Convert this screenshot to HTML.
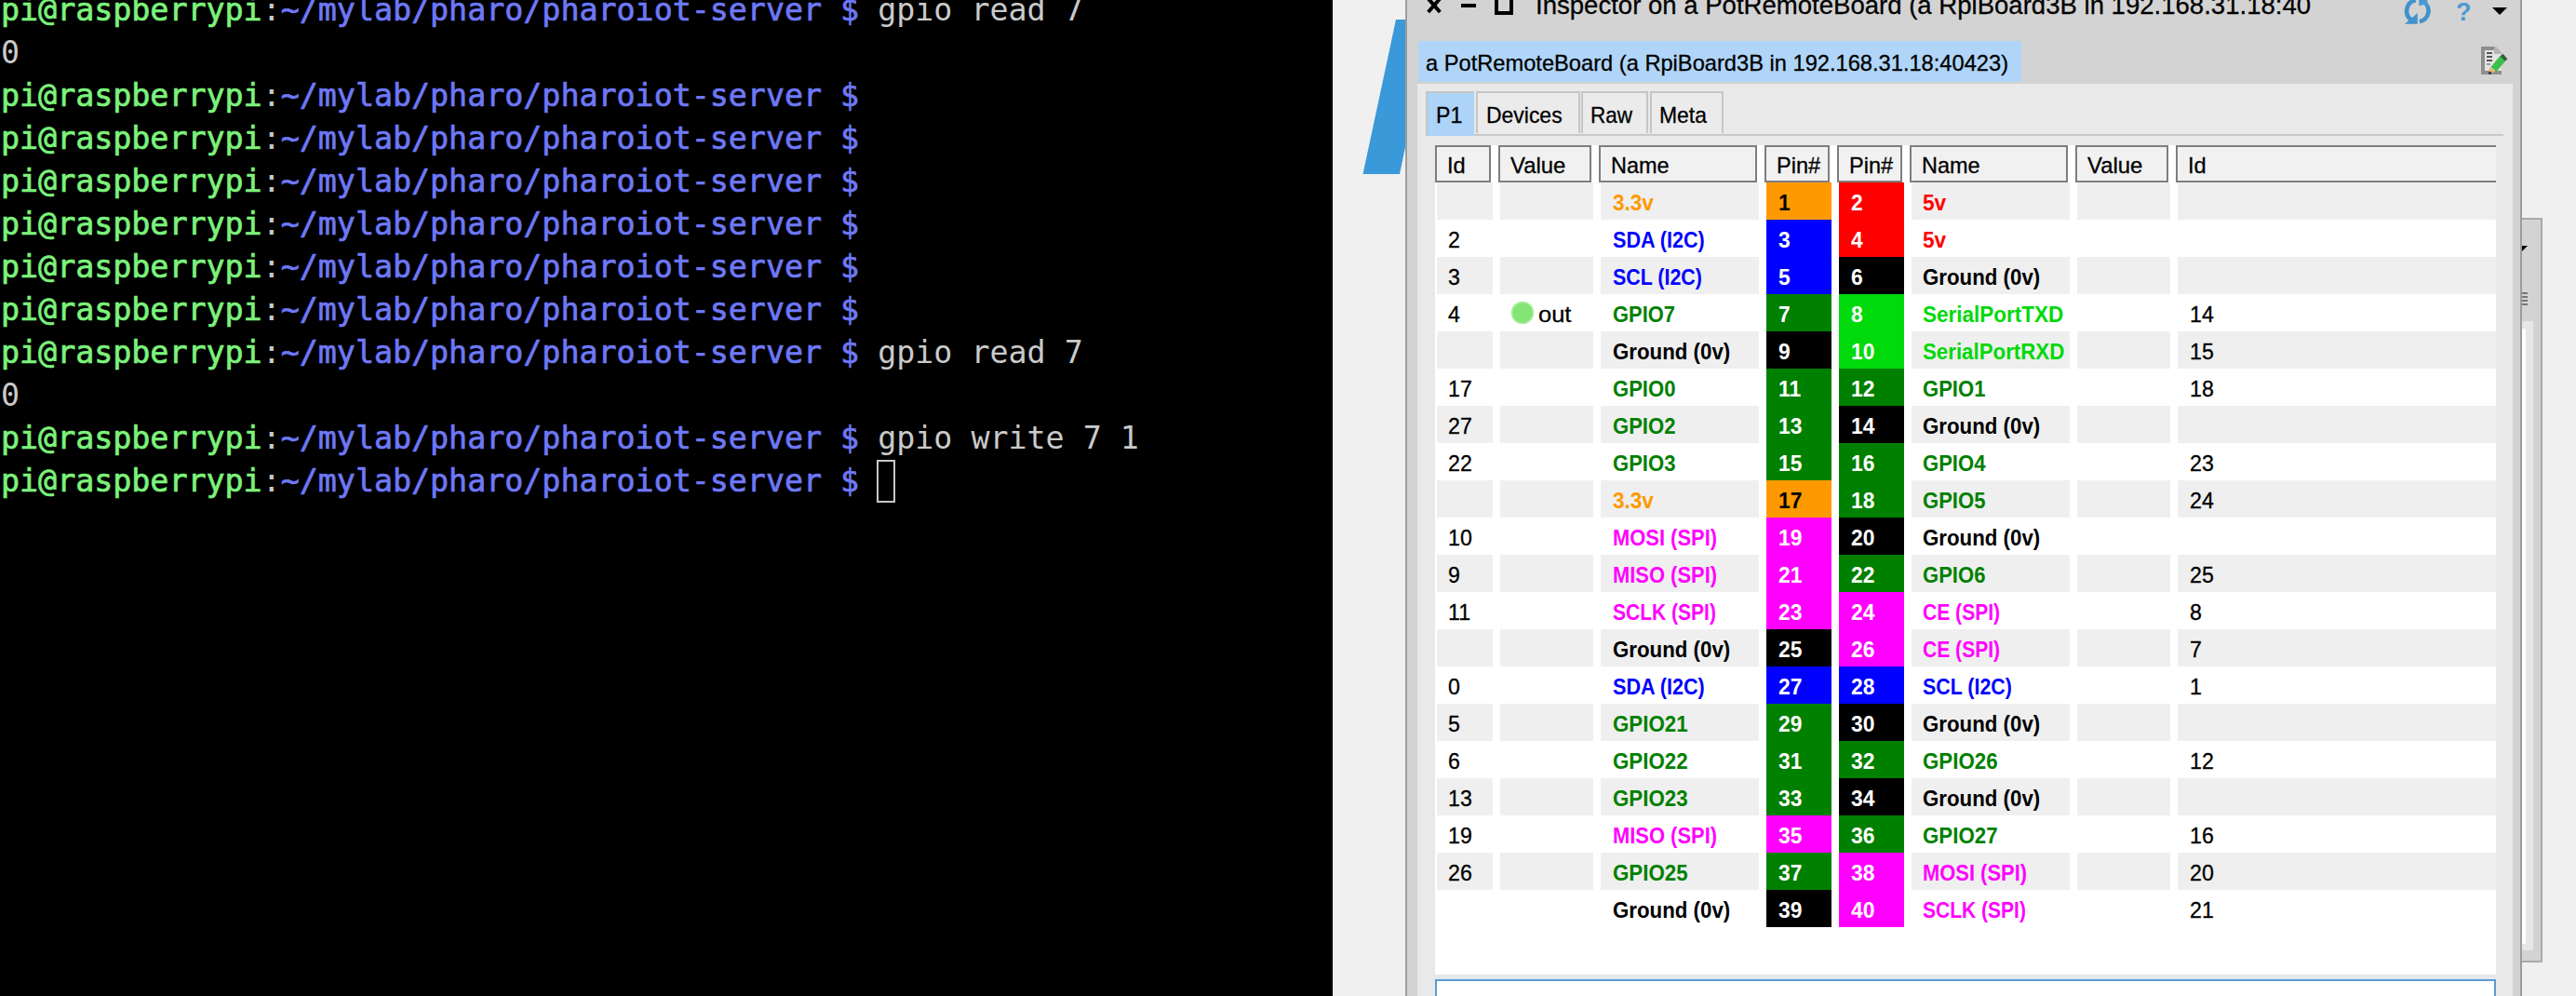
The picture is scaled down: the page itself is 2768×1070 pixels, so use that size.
<!DOCTYPE html>
<html><head><meta charset="utf-8"><title>Inspector</title>
<style>
html,body{margin:0;padding:0}
body{width:2768px;height:1070px;overflow:hidden;position:relative;background:#f0f0f0;font-family:"Liberation Sans",sans-serif;color:#000}
i{position:absolute;display:block;font-style:normal}
.r{-webkit-text-stroke:0.3px currentColor}
.t{position:absolute;white-space:nowrap;transform-origin:0 50%;line-height:1;display:block}
#term{position:absolute;left:0;top:0;width:1432px;height:1070px;background:#000;overflow:hidden}
.ln{position:absolute;left:1px;height:46px;line-height:46px;white-space:pre;font-family:"DejaVu Sans Mono","Liberation Mono",monospace;font-size:33.3px;letter-spacing:0px}
.ln b{font-weight:normal;-webkit-text-stroke:0.7px currentColor}
.g{color:#7cf27c}.b{color:#6e78f6}.w{color:#cacaca}
#cur{left:942px;top:494px;width:16px;height:42px;border:2px solid #c8c8c8}
#win{left:1510px;top:-20px;width:1196px;height:1110px;border:2px solid #9c9c9c;background:#d3d3d3}
#pane{left:1523px;top:90px;width:1177px;height:990px;background:#e9e9e9}
#lab{left:1524px;top:44px;width:648px;height:44px;background:#b0d5f8}
.tab{top:98px;height:45px;box-sizing:border-box;border:2px solid #c6c6c6;border-bottom:none;background:#ebebeb}
.tab.sel{background:#add3f8;border-right-color:#add3f8;height:48px}
#tabline{left:1532px;top:144px;width:1158px;height:2px;background:#c9c9c9}
#tbl{left:1542px;top:156px;width:1140px;height:891px;background:#fff}
.h{top:156px;height:40px;box-sizing:border-box;border:2px solid #7e7e7e;background:#f1f1f1}
.hl{border-right:none}
.z{height:40px;background:#efefef}
.p{width:70px;height:40px}
.dot{width:24px;height:24px;border-radius:50%;background:#84e475;box-shadow:inset 0 0 0 1.5px #a8ec9c}
#strip{left:1542px;top:1047px;width:1140px;height:5px;background:#e3e8ee}
#edit{left:1542px;top:1052px;width:1136px;height:40px;border:2px solid #5b9bd5;background:#fff}
#w2{left:2710px;top:234px;width:20px;height:796px;border:2px solid #a9a9a9;border-left:none;background:#d3d3d3}
</style></head><body>
<div id="term">
<div class="ln" style="top:-12px"><b class="g">pi@raspberrypi</b><span class="w">:</span><b class="b">~/mylab/pharo/pharoiot-server $</b> <span class="w">gpio read 7</span></div>
<div class="ln" style="top:34px"><span class="w">0</span></div>
<div class="ln" style="top:80px"><b class="g">pi@raspberrypi</b><span class="w">:</span><b class="b">~/mylab/pharo/pharoiot-server $</b> </div>
<div class="ln" style="top:126px"><b class="g">pi@raspberrypi</b><span class="w">:</span><b class="b">~/mylab/pharo/pharoiot-server $</b> </div>
<div class="ln" style="top:172px"><b class="g">pi@raspberrypi</b><span class="w">:</span><b class="b">~/mylab/pharo/pharoiot-server $</b> </div>
<div class="ln" style="top:218px"><b class="g">pi@raspberrypi</b><span class="w">:</span><b class="b">~/mylab/pharo/pharoiot-server $</b> </div>
<div class="ln" style="top:264px"><b class="g">pi@raspberrypi</b><span class="w">:</span><b class="b">~/mylab/pharo/pharoiot-server $</b> </div>
<div class="ln" style="top:310px"><b class="g">pi@raspberrypi</b><span class="w">:</span><b class="b">~/mylab/pharo/pharoiot-server $</b> </div>
<div class="ln" style="top:356px"><b class="g">pi@raspberrypi</b><span class="w">:</span><b class="b">~/mylab/pharo/pharoiot-server $</b> <span class="w">gpio read 7</span></div>
<div class="ln" style="top:402px"><span class="w">0</span></div>
<div class="ln" style="top:448px"><b class="g">pi@raspberrypi</b><span class="w">:</span><b class="b">~/mylab/pharo/pharoiot-server $</b> <span class="w">gpio write 7 1</span></div>
<div class="ln" style="top:494px"><b class="g">pi@raspberrypi</b><span class="w">:</span><b class="b">~/mylab/pharo/pharoiot-server $</b> </div>
<i id="cur"></i>
</div>
<svg style="position:absolute;left:1432px;top:0" width="90" height="200"><polygon points="68,21 78,21 78,158 72,187 32.5,187" fill="#3a99d8"/></svg>
<i id="w2"></i>
<i style="left:2710px;top:345px;width:12px;height:676px;background:#e7e7e7"></i>
<i style="left:2710px;top:353px;width:4px;height:661px;background:#fff"></i>
<svg style="position:absolute;left:2710px;top:260px" width="10" height="72"><polygon points="0,4 6,4 0,10" fill="#000"/><path d="M0 55h6M0 59h6M0 63h6M0 67h6" stroke="#777" stroke-width="2"/></svg>
<i id="win"></i>
<i id="pane"></i>
<i id="lab"></i>
<!-- title bar icons -->
<svg style="position:absolute;left:1530px;top:0" width="110" height="24">
<path d="M6 0L16 11.5M16 0L6 11.5" stroke="#000" stroke-width="4" stroke-linecap="square"/>
<rect x="40" y="4" width="16" height="4" fill="#000"/>
<rect x="78" y="-6" width="16" height="20" fill="none" stroke="#000" stroke-width="4"/>
</svg>
<span class="t r" style="left:1650.0px;top:-8.2px;font-size:28px;transform:scaleX(0.9838);">Inspector on a PotRemoteBoard (a RpiBoard3B in 192.168.31.18:40</span>
<svg style="position:absolute;left:2580px;top:0" width="120" height="90">
<g fill="none" stroke="#4192cd" stroke-width="4.6">
<path d="M15.8 0.3 A11.7 11.7 0 0 0 11.1 21.4"/><path d="M23.5 1.6 A11.7 11.7 0 0 1 19.9 23.3"/>
</g>
<polygon points="3.9,25.8 17.7,25.8 17.7,14 12,19" fill="#4192cd"/>
<polygon points="19.3,0 28,0 29.5,6.5 24,5 19.3,6.5" fill="#4a9ad2"/>
<text x="59" y="22" font-family="Liberation Sans, sans-serif" font-weight="bold" font-size="27" fill="#4a9ad3">?</text>
<polygon points="98,8 114,8 106,16" fill="#000"/>
<rect x="86" y="50" width="16" height="30" fill="#8e8e8e"/>
<rect x="86" y="76" width="22" height="4" fill="#8e8e8e"/>
<rect x="90" y="54" width="18" height="22" fill="#e4e4e4"/>
<polygon points="100,50 102,50 108,56 108,58 100,58" fill="#b4b4b4"/>
<path d="M92 57h6M92 61h6M92 65h6" stroke="#555" stroke-width="2"/><path d="M92 69h4" stroke="#999" stroke-width="2"/>
<path d="M109.5 62.5L99.5 74.5" stroke="#3dbf4c" stroke-width="8"/>
<path d="M108 59L113 64.5" stroke="#35603c" stroke-width="4"/>
<polygon points="95.5,72 101,77 94,79.5" fill="#f4ad5c"/>
<rect x="94" y="77" width="3" height="3" fill="#44355e"/>
</svg>
<span class="t r" style="left:1531.5px;top:56.2px;font-size:24px;transform:scaleX(0.9857);">a PotRemoteBoard (a RpiBoard3B in 192.168.31.18:40423)</span>
<i id="tabline"></i>
<i class="tab sel" style="left:1532px;width:52px"></i>
<span class="t r" style="left:1542.5px;top:111.5px;font-size:24px;transform:scaleX(0.9650);">P1</span>
<i class="tab" style="left:1586px;width:112px"></i>
<span class="t r" style="left:1596.5px;top:111.5px;font-size:24px;transform:scaleX(0.9560);">Devices</span>
<i class="tab" style="left:1699px;width:72px"></i>
<span class="t r" style="left:1708.5px;top:111.5px;font-size:24px;transform:scaleX(0.9373);">Raw</span>
<i class="tab" style="left:1773px;width:79px"></i>
<span class="t r" style="left:1783.0px;top:111.5px;font-size:24px;transform:scaleX(0.9559);">Meta</span>
<i id="tbl"></i>
<i class="h" style="left:1542px;width:60px"></i>
<span class="t r" style="left:1554.7px;top:165.7px;font-size:24px;transform:scaleX(0.9839);">Id</span>
<i class="h" style="left:1610px;width:100px"></i>
<span class="t r" style="left:1622.7px;top:165.7px;font-size:24px;transform:scaleX(0.9963);">Value</span>
<i class="h" style="left:1718px;width:170px"></i>
<span class="t r" style="left:1730.7px;top:165.7px;font-size:24px;transform:scaleX(0.9785);">Name</span>
<i class="h" style="left:1896px;width:70px"></i>
<span class="t r" style="left:1908.7px;top:165.7px;font-size:24px;transform:scaleX(0.9784);">Pin#</span>
<i class="h" style="left:1974px;width:70px"></i>
<span class="t r" style="left:1986.7px;top:165.7px;font-size:24px;transform:scaleX(0.9784);">Pin#</span>
<i class="h" style="left:2052px;width:170px"></i>
<span class="t r" style="left:2064.7px;top:165.7px;font-size:24px;transform:scaleX(0.9785);">Name</span>
<i class="h" style="left:2230px;width:100px"></i>
<span class="t r" style="left:2242.7px;top:165.7px;font-size:24px;transform:scaleX(0.9963);">Value</span>
<i class="h hl" style="left:2338px;width:344px"></i>
<span class="t r" style="left:2350.7px;top:165.7px;font-size:24px;transform:scaleX(0.9839);">Id</span>
<i class="z" style="left:1544px;top:196px;width:60px"></i><i class="z" style="left:1612px;top:196px;width:100px"></i><i class="z" style="left:1720px;top:196px;width:170px"></i><i class="z" style="left:1898px;top:196px;width:70px"></i><i class="z" style="left:1976px;top:196px;width:70px"></i><i class="z" style="left:2054px;top:196px;width:170px"></i><i class="z" style="left:2232px;top:196px;width:100px"></i><i class="z" style="left:2340px;top:196px;width:342px"></i><i class="p" style="left:1898px;top:196px;background:#ff9900"></i><i class="p" style="left:1976px;top:196px;background:#ff0000"></i><span class="t " style="left:1732.7px;top:206.1px;font-size:24px;transform:scaleX(0.9402);color:#ff9900;font-weight:bold;">3.3v</span><span class="t " style="left:1910.5px;top:206.1px;font-size:24px;transform:scaleX(0.9500);color:#000;font-weight:bold;">1</span><span class="t " style="left:1988.5px;top:206.1px;font-size:24px;transform:scaleX(0.9500);color:#fff;font-weight:bold;">2</span><span class="t " style="left:2066.3px;top:206.1px;font-size:24px;transform:scaleX(0.9449);color:#ff0000;font-weight:bold;">5v</span>
<i class="p" style="left:1898px;top:236px;background:#0000ff"></i><i class="p" style="left:1976px;top:236px;background:#ff0000"></i><span class="t r" style="left:1556.0px;top:246.1px;font-size:24px;transform:scaleX(0.9650);">2</span><span class="t " style="left:1732.7px;top:246.1px;font-size:24px;transform:scaleX(0.8990);color:#0000ff;font-weight:bold;">SDA (I2C)</span><span class="t " style="left:1910.5px;top:246.1px;font-size:24px;transform:scaleX(0.9500);color:#fff;font-weight:bold;">3</span><span class="t " style="left:1988.5px;top:246.1px;font-size:24px;transform:scaleX(0.9500);color:#fff;font-weight:bold;">4</span><span class="t " style="left:2066.3px;top:246.1px;font-size:24px;transform:scaleX(0.9449);color:#ff0000;font-weight:bold;">5v</span>
<i class="z" style="left:1544px;top:276px;width:60px"></i><i class="z" style="left:1612px;top:276px;width:100px"></i><i class="z" style="left:1720px;top:276px;width:170px"></i><i class="z" style="left:1898px;top:276px;width:70px"></i><i class="z" style="left:1976px;top:276px;width:70px"></i><i class="z" style="left:2054px;top:276px;width:170px"></i><i class="z" style="left:2232px;top:276px;width:100px"></i><i class="z" style="left:2340px;top:276px;width:342px"></i><i class="p" style="left:1898px;top:276px;background:#0000ff"></i><i class="p" style="left:1976px;top:276px;background:#000000"></i><span class="t r" style="left:1556.0px;top:286.1px;font-size:24px;transform:scaleX(0.9650);">3</span><span class="t " style="left:1732.7px;top:286.1px;font-size:24px;transform:scaleX(0.8910);color:#0000ff;font-weight:bold;">SCL (I2C)</span><span class="t " style="left:1910.5px;top:286.1px;font-size:24px;transform:scaleX(0.9500);color:#fff;font-weight:bold;">5</span><span class="t " style="left:1988.5px;top:286.1px;font-size:24px;transform:scaleX(0.9500);color:#fff;font-weight:bold;">6</span><span class="t " style="left:2066.3px;top:286.1px;font-size:24px;transform:scaleX(0.9281);color:#000000;font-weight:bold;">Ground (0v)</span>
<i class="p" style="left:1898px;top:316px;background:#008000"></i><i class="p" style="left:1976px;top:316px;background:#00d90a"></i><span class="t r" style="left:1556.0px;top:326.1px;font-size:24px;transform:scaleX(0.9650);">4</span><i class="dot" style="left:1624px;top:324px"></i><span class="t r" style="left:1653.0px;top:326.1px;font-size:24px;transform:scaleX(1.0600);">out</span><span class="t " style="left:1732.7px;top:326.1px;font-size:24px;transform:scaleX(0.9123);color:#008000;font-weight:bold;">GPIO7</span><span class="t " style="left:1910.5px;top:326.1px;font-size:24px;transform:scaleX(0.9500);color:#fff;font-weight:bold;">7</span><span class="t " style="left:1988.5px;top:326.1px;font-size:24px;transform:scaleX(0.9500);color:#fff;font-weight:bold;">8</span><span class="t " style="left:2066.3px;top:326.1px;font-size:24px;transform:scaleX(0.9375);color:#00d90a;font-weight:bold;">SerialPortTXD</span><span class="t r" style="left:2352.5px;top:326.1px;font-size:24px;transform:scaleX(0.9650);">14</span>
<i class="z" style="left:1544px;top:356px;width:60px"></i><i class="z" style="left:1612px;top:356px;width:100px"></i><i class="z" style="left:1720px;top:356px;width:170px"></i><i class="z" style="left:1898px;top:356px;width:70px"></i><i class="z" style="left:1976px;top:356px;width:70px"></i><i class="z" style="left:2054px;top:356px;width:170px"></i><i class="z" style="left:2232px;top:356px;width:100px"></i><i class="z" style="left:2340px;top:356px;width:342px"></i><i class="p" style="left:1898px;top:356px;background:#000000"></i><i class="p" style="left:1976px;top:356px;background:#00d90a"></i><span class="t " style="left:1732.7px;top:366.1px;font-size:24px;transform:scaleX(0.9281);color:#000000;font-weight:bold;">Ground (0v)</span><span class="t " style="left:1910.5px;top:366.1px;font-size:24px;transform:scaleX(0.9500);color:#fff;font-weight:bold;">9</span><span class="t " style="left:1988.5px;top:366.1px;font-size:24px;transform:scaleX(0.9500);color:#fff;font-weight:bold;">10</span><span class="t " style="left:2066.3px;top:366.1px;font-size:24px;transform:scaleX(0.9284);color:#00d90a;font-weight:bold;">SerialPortRXD</span><span class="t r" style="left:2352.5px;top:366.1px;font-size:24px;transform:scaleX(0.9650);">15</span>
<i class="p" style="left:1898px;top:396px;background:#008000"></i><i class="p" style="left:1976px;top:396px;background:#008000"></i><span class="t r" style="left:1556.0px;top:406.1px;font-size:24px;transform:scaleX(0.9650);">17</span><span class="t " style="left:1732.7px;top:406.1px;font-size:24px;transform:scaleX(0.9191);color:#008000;font-weight:bold;">GPIO0</span><span class="t " style="left:1910.5px;top:406.1px;font-size:24px;transform:scaleX(0.9500);color:#fff;font-weight:bold;">11</span><span class="t " style="left:1988.5px;top:406.1px;font-size:24px;transform:scaleX(0.9500);color:#fff;font-weight:bold;">12</span><span class="t " style="left:2066.3px;top:406.1px;font-size:24px;transform:scaleX(0.9191);color:#008000;font-weight:bold;">GPIO1</span><span class="t r" style="left:2352.5px;top:406.1px;font-size:24px;transform:scaleX(0.9650);">18</span>
<i class="z" style="left:1544px;top:436px;width:60px"></i><i class="z" style="left:1612px;top:436px;width:100px"></i><i class="z" style="left:1720px;top:436px;width:170px"></i><i class="z" style="left:1898px;top:436px;width:70px"></i><i class="z" style="left:1976px;top:436px;width:70px"></i><i class="z" style="left:2054px;top:436px;width:170px"></i><i class="z" style="left:2232px;top:436px;width:100px"></i><i class="z" style="left:2340px;top:436px;width:342px"></i><i class="p" style="left:1898px;top:436px;background:#008000"></i><i class="p" style="left:1976px;top:436px;background:#000000"></i><span class="t r" style="left:1556.0px;top:446.1px;font-size:24px;transform:scaleX(0.9650);">27</span><span class="t " style="left:1732.7px;top:446.1px;font-size:24px;transform:scaleX(0.9191);color:#008000;font-weight:bold;">GPIO2</span><span class="t " style="left:1910.5px;top:446.1px;font-size:24px;transform:scaleX(0.9500);color:#fff;font-weight:bold;">13</span><span class="t " style="left:1988.5px;top:446.1px;font-size:24px;transform:scaleX(0.9500);color:#fff;font-weight:bold;">14</span><span class="t " style="left:2066.3px;top:446.1px;font-size:24px;transform:scaleX(0.9281);color:#000000;font-weight:bold;">Ground (0v)</span>
<i class="p" style="left:1898px;top:476px;background:#008000"></i><i class="p" style="left:1976px;top:476px;background:#008000"></i><span class="t r" style="left:1556.0px;top:486.1px;font-size:24px;transform:scaleX(0.9650);">22</span><span class="t " style="left:1732.7px;top:486.1px;font-size:24px;transform:scaleX(0.9191);color:#008000;font-weight:bold;">GPIO3</span><span class="t " style="left:1910.5px;top:486.1px;font-size:24px;transform:scaleX(0.9500);color:#fff;font-weight:bold;">15</span><span class="t " style="left:1988.5px;top:486.1px;font-size:24px;transform:scaleX(0.9500);color:#fff;font-weight:bold;">16</span><span class="t " style="left:2066.3px;top:486.1px;font-size:24px;transform:scaleX(0.9191);color:#008000;font-weight:bold;">GPIO4</span><span class="t r" style="left:2352.5px;top:486.1px;font-size:24px;transform:scaleX(0.9650);">23</span>
<i class="z" style="left:1544px;top:516px;width:60px"></i><i class="z" style="left:1612px;top:516px;width:100px"></i><i class="z" style="left:1720px;top:516px;width:170px"></i><i class="z" style="left:1898px;top:516px;width:70px"></i><i class="z" style="left:1976px;top:516px;width:70px"></i><i class="z" style="left:2054px;top:516px;width:170px"></i><i class="z" style="left:2232px;top:516px;width:100px"></i><i class="z" style="left:2340px;top:516px;width:342px"></i><i class="p" style="left:1898px;top:516px;background:#ff9900"></i><i class="p" style="left:1976px;top:516px;background:#008000"></i><span class="t " style="left:1732.7px;top:526.1px;font-size:24px;transform:scaleX(0.9402);color:#ff9900;font-weight:bold;">3.3v</span><span class="t " style="left:1910.5px;top:526.1px;font-size:24px;transform:scaleX(0.9500);color:#000;font-weight:bold;">17</span><span class="t " style="left:1988.5px;top:526.1px;font-size:24px;transform:scaleX(0.9500);color:#fff;font-weight:bold;">18</span><span class="t " style="left:2066.3px;top:526.1px;font-size:24px;transform:scaleX(0.9191);color:#008000;font-weight:bold;">GPIO5</span><span class="t r" style="left:2352.5px;top:526.1px;font-size:24px;transform:scaleX(0.9650);">24</span>
<i class="p" style="left:1898px;top:556px;background:#ff00ff"></i><i class="p" style="left:1976px;top:556px;background:#000000"></i><span class="t r" style="left:1556.0px;top:566.1px;font-size:24px;transform:scaleX(0.9650);">10</span><span class="t " style="left:1732.7px;top:566.1px;font-size:24px;transform:scaleX(0.9132);color:#ff00ff;font-weight:bold;">MOSI (SPI)</span><span class="t " style="left:1910.5px;top:566.1px;font-size:24px;transform:scaleX(0.9500);color:#fff;font-weight:bold;">19</span><span class="t " style="left:1988.5px;top:566.1px;font-size:24px;transform:scaleX(0.9500);color:#fff;font-weight:bold;">20</span><span class="t " style="left:2066.3px;top:566.1px;font-size:24px;transform:scaleX(0.9281);color:#000000;font-weight:bold;">Ground (0v)</span>
<i class="z" style="left:1544px;top:596px;width:60px"></i><i class="z" style="left:1612px;top:596px;width:100px"></i><i class="z" style="left:1720px;top:596px;width:170px"></i><i class="z" style="left:1898px;top:596px;width:70px"></i><i class="z" style="left:1976px;top:596px;width:70px"></i><i class="z" style="left:2054px;top:596px;width:170px"></i><i class="z" style="left:2232px;top:596px;width:100px"></i><i class="z" style="left:2340px;top:596px;width:342px"></i><i class="p" style="left:1898px;top:596px;background:#ff00ff"></i><i class="p" style="left:1976px;top:596px;background:#008000"></i><span class="t r" style="left:1556.0px;top:606.1px;font-size:24px;transform:scaleX(0.9650);">9</span><span class="t " style="left:1732.7px;top:606.1px;font-size:24px;transform:scaleX(0.9132);color:#ff00ff;font-weight:bold;">MISO (SPI)</span><span class="t " style="left:1910.5px;top:606.1px;font-size:24px;transform:scaleX(0.9500);color:#fff;font-weight:bold;">21</span><span class="t " style="left:1988.5px;top:606.1px;font-size:24px;transform:scaleX(0.9500);color:#fff;font-weight:bold;">22</span><span class="t " style="left:2066.3px;top:606.1px;font-size:24px;transform:scaleX(0.9191);color:#008000;font-weight:bold;">GPIO6</span><span class="t r" style="left:2352.5px;top:606.1px;font-size:24px;transform:scaleX(0.9650);">25</span>
<i class="p" style="left:1898px;top:636px;background:#ff00ff"></i><i class="p" style="left:1976px;top:636px;background:#ff00ff"></i><span class="t r" style="left:1556.0px;top:646.1px;font-size:24px;transform:scaleX(0.9650);">11</span><span class="t " style="left:1732.7px;top:646.1px;font-size:24px;transform:scaleX(0.8759);color:#ff00ff;font-weight:bold;">SCLK (SPI)</span><span class="t " style="left:1910.5px;top:646.1px;font-size:24px;transform:scaleX(0.9500);color:#fff;font-weight:bold;">23</span><span class="t " style="left:1988.5px;top:646.1px;font-size:24px;transform:scaleX(0.9500);color:#fff;font-weight:bold;">24</span><span class="t " style="left:2066.3px;top:646.1px;font-size:24px;transform:scaleX(0.8777);color:#ff00ff;font-weight:bold;">CE (SPI)</span><span class="t r" style="left:2352.5px;top:646.1px;font-size:24px;transform:scaleX(0.9650);">8</span>
<i class="z" style="left:1544px;top:676px;width:60px"></i><i class="z" style="left:1612px;top:676px;width:100px"></i><i class="z" style="left:1720px;top:676px;width:170px"></i><i class="z" style="left:1898px;top:676px;width:70px"></i><i class="z" style="left:1976px;top:676px;width:70px"></i><i class="z" style="left:2054px;top:676px;width:170px"></i><i class="z" style="left:2232px;top:676px;width:100px"></i><i class="z" style="left:2340px;top:676px;width:342px"></i><i class="p" style="left:1898px;top:676px;background:#000000"></i><i class="p" style="left:1976px;top:676px;background:#ff00ff"></i><span class="t " style="left:1732.7px;top:686.1px;font-size:24px;transform:scaleX(0.9281);color:#000000;font-weight:bold;">Ground (0v)</span><span class="t " style="left:1910.5px;top:686.1px;font-size:24px;transform:scaleX(0.9500);color:#fff;font-weight:bold;">25</span><span class="t " style="left:1988.5px;top:686.1px;font-size:24px;transform:scaleX(0.9500);color:#fff;font-weight:bold;">26</span><span class="t " style="left:2066.3px;top:686.1px;font-size:24px;transform:scaleX(0.8777);color:#ff00ff;font-weight:bold;">CE (SPI)</span><span class="t r" style="left:2352.5px;top:686.1px;font-size:24px;transform:scaleX(0.9650);">7</span>
<i class="p" style="left:1898px;top:716px;background:#0000ff"></i><i class="p" style="left:1976px;top:716px;background:#0000ff"></i><span class="t r" style="left:1556.0px;top:726.1px;font-size:24px;transform:scaleX(0.9650);">0</span><span class="t " style="left:1732.7px;top:726.1px;font-size:24px;transform:scaleX(0.8990);color:#0000ff;font-weight:bold;">SDA (I2C)</span><span class="t " style="left:1910.5px;top:726.1px;font-size:24px;transform:scaleX(0.9500);color:#fff;font-weight:bold;">27</span><span class="t " style="left:1988.5px;top:726.1px;font-size:24px;transform:scaleX(0.9500);color:#fff;font-weight:bold;">28</span><span class="t " style="left:2066.3px;top:726.1px;font-size:24px;transform:scaleX(0.8910);color:#0000ff;font-weight:bold;">SCL (I2C)</span><span class="t r" style="left:2352.5px;top:726.1px;font-size:24px;transform:scaleX(0.9650);">1</span>
<i class="z" style="left:1544px;top:756px;width:60px"></i><i class="z" style="left:1612px;top:756px;width:100px"></i><i class="z" style="left:1720px;top:756px;width:170px"></i><i class="z" style="left:1898px;top:756px;width:70px"></i><i class="z" style="left:1976px;top:756px;width:70px"></i><i class="z" style="left:2054px;top:756px;width:170px"></i><i class="z" style="left:2232px;top:756px;width:100px"></i><i class="z" style="left:2340px;top:756px;width:342px"></i><i class="p" style="left:1898px;top:756px;background:#008000"></i><i class="p" style="left:1976px;top:756px;background:#000000"></i><span class="t r" style="left:1556.0px;top:766.1px;font-size:24px;transform:scaleX(0.9650);">5</span><span class="t " style="left:1732.7px;top:766.1px;font-size:24px;transform:scaleX(0.9291);color:#008000;font-weight:bold;">GPIO21</span><span class="t " style="left:1910.5px;top:766.1px;font-size:24px;transform:scaleX(0.9500);color:#fff;font-weight:bold;">29</span><span class="t " style="left:1988.5px;top:766.1px;font-size:24px;transform:scaleX(0.9500);color:#fff;font-weight:bold;">30</span><span class="t " style="left:2066.3px;top:766.1px;font-size:24px;transform:scaleX(0.9281);color:#000000;font-weight:bold;">Ground (0v)</span>
<i class="p" style="left:1898px;top:796px;background:#008000"></i><i class="p" style="left:1976px;top:796px;background:#008000"></i><span class="t r" style="left:1556.0px;top:806.1px;font-size:24px;transform:scaleX(0.9650);">6</span><span class="t " style="left:1732.7px;top:806.1px;font-size:24px;transform:scaleX(0.9291);color:#008000;font-weight:bold;">GPIO22</span><span class="t " style="left:1910.5px;top:806.1px;font-size:24px;transform:scaleX(0.9500);color:#fff;font-weight:bold;">31</span><span class="t " style="left:1988.5px;top:806.1px;font-size:24px;transform:scaleX(0.9500);color:#fff;font-weight:bold;">32</span><span class="t " style="left:2066.3px;top:806.1px;font-size:24px;transform:scaleX(0.9291);color:#008000;font-weight:bold;">GPIO26</span><span class="t r" style="left:2352.5px;top:806.1px;font-size:24px;transform:scaleX(0.9650);">12</span>
<i class="z" style="left:1544px;top:836px;width:60px"></i><i class="z" style="left:1612px;top:836px;width:100px"></i><i class="z" style="left:1720px;top:836px;width:170px"></i><i class="z" style="left:1898px;top:836px;width:70px"></i><i class="z" style="left:1976px;top:836px;width:70px"></i><i class="z" style="left:2054px;top:836px;width:170px"></i><i class="z" style="left:2232px;top:836px;width:100px"></i><i class="z" style="left:2340px;top:836px;width:342px"></i><i class="p" style="left:1898px;top:836px;background:#008000"></i><i class="p" style="left:1976px;top:836px;background:#000000"></i><span class="t r" style="left:1556.0px;top:846.1px;font-size:24px;transform:scaleX(0.9650);">13</span><span class="t " style="left:1732.7px;top:846.1px;font-size:24px;transform:scaleX(0.9291);color:#008000;font-weight:bold;">GPIO23</span><span class="t " style="left:1910.5px;top:846.1px;font-size:24px;transform:scaleX(0.9500);color:#fff;font-weight:bold;">33</span><span class="t " style="left:1988.5px;top:846.1px;font-size:24px;transform:scaleX(0.9500);color:#fff;font-weight:bold;">34</span><span class="t " style="left:2066.3px;top:846.1px;font-size:24px;transform:scaleX(0.9281);color:#000000;font-weight:bold;">Ground (0v)</span>
<i class="p" style="left:1898px;top:876px;background:#ff00ff"></i><i class="p" style="left:1976px;top:876px;background:#008000"></i><span class="t r" style="left:1556.0px;top:886.1px;font-size:24px;transform:scaleX(0.9650);">19</span><span class="t " style="left:1732.7px;top:886.1px;font-size:24px;transform:scaleX(0.9132);color:#ff00ff;font-weight:bold;">MISO (SPI)</span><span class="t " style="left:1910.5px;top:886.1px;font-size:24px;transform:scaleX(0.9500);color:#fff;font-weight:bold;">35</span><span class="t " style="left:1988.5px;top:886.1px;font-size:24px;transform:scaleX(0.9500);color:#fff;font-weight:bold;">36</span><span class="t " style="left:2066.3px;top:886.1px;font-size:24px;transform:scaleX(0.9291);color:#008000;font-weight:bold;">GPIO27</span><span class="t r" style="left:2352.5px;top:886.1px;font-size:24px;transform:scaleX(0.9650);">16</span>
<i class="z" style="left:1544px;top:916px;width:60px"></i><i class="z" style="left:1612px;top:916px;width:100px"></i><i class="z" style="left:1720px;top:916px;width:170px"></i><i class="z" style="left:1898px;top:916px;width:70px"></i><i class="z" style="left:1976px;top:916px;width:70px"></i><i class="z" style="left:2054px;top:916px;width:170px"></i><i class="z" style="left:2232px;top:916px;width:100px"></i><i class="z" style="left:2340px;top:916px;width:342px"></i><i class="p" style="left:1898px;top:916px;background:#008000"></i><i class="p" style="left:1976px;top:916px;background:#ff00ff"></i><span class="t r" style="left:1556.0px;top:926.1px;font-size:24px;transform:scaleX(0.9650);">26</span><span class="t " style="left:1732.7px;top:926.1px;font-size:24px;transform:scaleX(0.9291);color:#008000;font-weight:bold;">GPIO25</span><span class="t " style="left:1910.5px;top:926.1px;font-size:24px;transform:scaleX(0.9500);color:#fff;font-weight:bold;">37</span><span class="t " style="left:1988.5px;top:926.1px;font-size:24px;transform:scaleX(0.9500);color:#fff;font-weight:bold;">38</span><span class="t " style="left:2066.3px;top:926.1px;font-size:24px;transform:scaleX(0.9132);color:#ff00ff;font-weight:bold;">MOSI (SPI)</span><span class="t r" style="left:2352.5px;top:926.1px;font-size:24px;transform:scaleX(0.9650);">20</span>
<i class="p" style="left:1898px;top:956px;background:#000000"></i><i class="p" style="left:1976px;top:956px;background:#ff00ff"></i><span class="t " style="left:1732.7px;top:966.1px;font-size:24px;transform:scaleX(0.9281);color:#000000;font-weight:bold;">Ground (0v)</span><span class="t " style="left:1910.5px;top:966.1px;font-size:24px;transform:scaleX(0.9500);color:#fff;font-weight:bold;">39</span><span class="t " style="left:1988.5px;top:966.1px;font-size:24px;transform:scaleX(0.9500);color:#fff;font-weight:bold;">40</span><span class="t " style="left:2066.3px;top:966.1px;font-size:24px;transform:scaleX(0.8759);color:#ff00ff;font-weight:bold;">SCLK (SPI)</span><span class="t r" style="left:2352.5px;top:966.1px;font-size:24px;transform:scaleX(0.9650);">21</span>
<i id="strip"></i>
<i id="edit"></i>
</body></html>
